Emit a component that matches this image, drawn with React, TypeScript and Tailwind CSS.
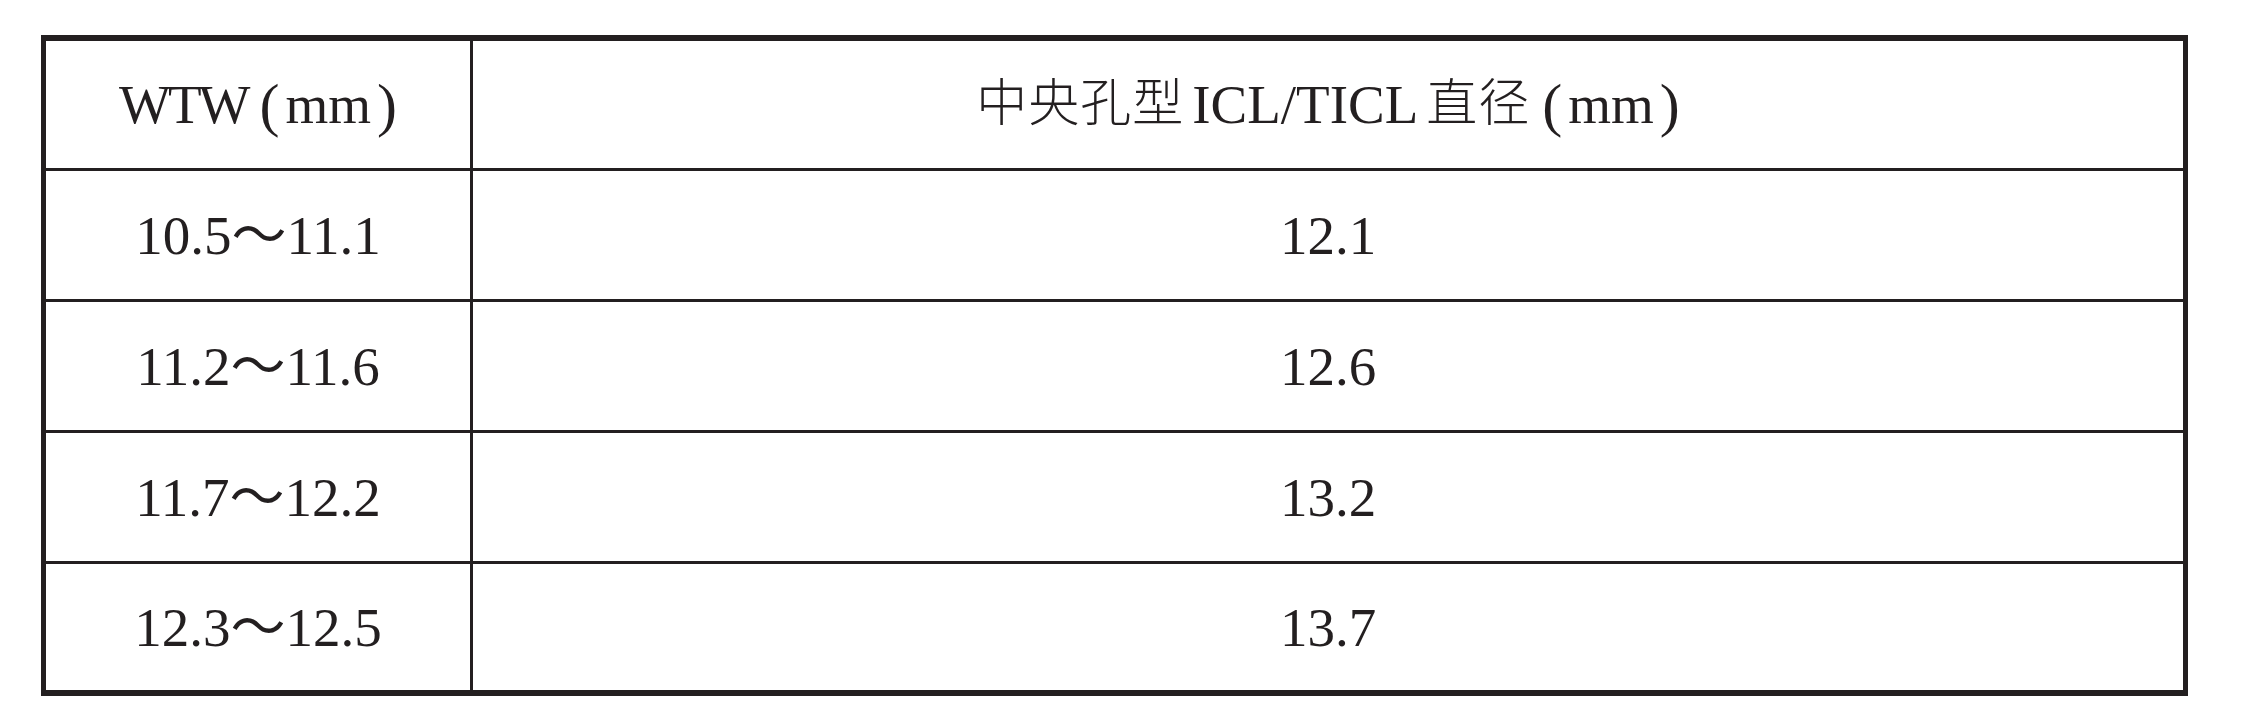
import React from "react";

const rows = [
  ["10.5～11.1", "12.1"],
  ["11.2～11.6", "12.6"],
  ["11.7～12.2", "13.2"],
  ["12.3～12.5", "13.7"],
];

const font = "font-['Liberation_Serif','Noto_Sans_CJK_SC',serif]";

function MM() {
  return (
    <>
      <span className="ml-[12px] mr-[6px] text-[60px] font-light">(</span>
      mm
      <span className="ml-[6px] text-[60px] font-light">)</span>
    </>
  );
}

export default function App() {
  return (
    <div className={`w-[2256px] h-[717px] bg-white pt-[35px] pl-[41px] text-[#231f20] ${font}`}>
      <div className="w-[2147px] border-x-[5px] border-y-[6px] border-[#231f20] flex flex-col">
        <div className="h-[130px] flex border-b-[3px] border-[#231f20]">
          <div className="w-[427px] border-r-[3px] border-[#231f20] flex items-center justify-center text-[55px] leading-none">
            <span className="tracking-[-3px]">WTW</span>
            <MM />
          </div>
          <div className="flex-1 flex items-center justify-center text-[55px] leading-none">
            <span className="text-[51px] font-light tracking-[1px]">中央孔型</span>
            <span className="ml-[8px] mr-[8px]">ICL/TICL</span>
            <span className="text-[51px] font-light tracking-[1px]">直径</span>
            <MM />
          </div>
        </div>
        {rows.map((r, i) => (
          <div
            key={i}
            className={
              i < rows.length - 1
                ? "h-[131px] flex border-b-[3px] border-[#231f20]"
                : "h-[126px] flex"
            }
          >
            <div className="w-[427px] border-r-[3px] border-[#231f20] flex items-center justify-center text-[55px] leading-none">
              {r[0]}
            </div>
            <div className="flex-1 flex items-center justify-center text-[55px] leading-none">
              {r[1]}
            </div>
          </div>
        ))}
      </div>
    </div>
  );
}
